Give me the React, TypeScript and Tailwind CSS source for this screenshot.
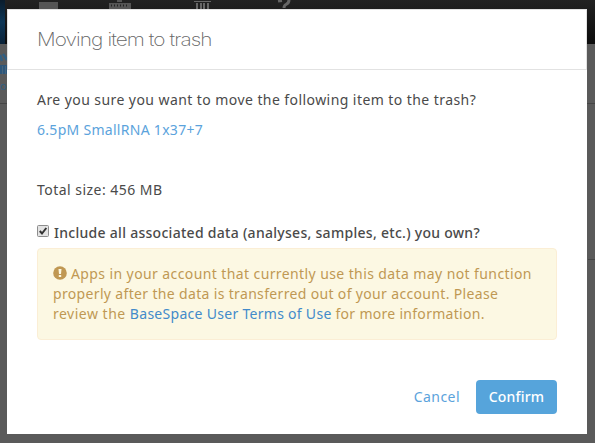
import React from "react";

const line = "block w-fit whitespace-nowrap";

function Backdrop() {
  return (
    <div className="absolute inset-0 flex flex-col bg-[#5a5a5a]">
      <div className="h-11 shrink-0 bg-gradient-to-b from-[#222] to-[#0c0c0c]">
        <svg width="595" height="44" viewBox="0 0 595 44">
          <defs>
            <linearGradient id="brand" x1="0" y1="0" x2="0" y2="1">
              <stop offset="0" stopColor="#0a1c2c" />
              <stop offset="0.5" stopColor="#0d3656" />
              <stop offset="1" stopColor="#0a2238" />
            </linearGradient>
          </defs>
          <rect x="0" y="0" width="5" height="44" fill="url(#brand)" />
          <rect x="39" y="2" width="19" height="8" fill="#555" />
          <rect x="117" y="0" width="5" height="2" fill="#555" />
          <path d="M109 3h22v7h-22z" fill="#555" />
          <path d="M111 5.5h18" stroke="#222" strokeWidth="2" strokeDasharray="1 2" />
          <path d="M194 1h17v1h-17zM196 3h2v7h-2zM200 3h2v7h-2zM203 3h2v7h-2zM207 3h2v7h-2z" fill="#666" />
          <path d="M278 1l4-.5M289 0q0 3-3 4.500q-2 1-2 3.500" fill="none" stroke="#666" strokeWidth="3" />
        </svg>
      </div>
      <svg width="595" height="399" viewBox="0 44 595 399">
        <path d="M0 55l2 6M3 54l4 6" stroke="#315f82" strokeWidth="2.500" />
        <rect x="0" y="65" width="7" height="9" fill="#2d567a" />
        <path d="M2.500 66v8M5.500 66v8" stroke="#46647c" />
        <text x="0" y="90" fontFamily="Noto Sans, sans-serif" fontSize="11" fill="#315f82">o</text>
        <path d="M0 103.5h595M588 259.5h7" stroke="#454545" />
      </svg>
    </div>
  );
}

export default function App() {
  return (
    <div className="relative h-[443px] w-[595px] overflow-hidden font-['Noto_Sans',sans-serif] text-[14px] leading-5 text-[#4a4a4a]">
      <Backdrop />
      <div className="relative ml-[7px] mt-[9px] flex h-[425px] w-[580px] flex-col bg-white">
        <header className="flex h-[61px] shrink-0 items-center border border-[#e2e2e2] pl-[29px]">
          <h1 className={`${line} origin-left scale-x-[1.155] font-['Inter',sans-serif] text-[18px] font-extralight tracking-[-0.8px] text-[#666]`}>Moving item to trash</h1>
        </header>
        <main className="px-[30px] pt-5">
          <p className={`${line} tracking-[0.43px]`}>Are you sure you want to move the following item to the trash?</p>
          <a className={`${line} mt-[10px] tracking-[0.29px] text-[#5ba3dc]`}>6.5pM SmallRNA 1x37+7</a>
          <p className={`${line} mt-10 tracking-[0.47px]`}>Total size: 456 MB</p>
          <label className="mt-[23px] flex h-5 items-center">
            <svg className="-mt-1 mr-[5px]" width="12" height="12" viewBox="0 0 12 12">
              <rect x=".5" y=".5" width="11" height="11" rx="1" fill="#e3e3e3" stroke="#8d8d8d" />
              <path d="M2.800 6l2.200 2.500L9.300 3" fill="none" stroke="#333" strokeWidth="2" />
            </svg>
            <span className={`${line} font-medium tracking-[0.285px]`}>Include all associated data (analyses, samples, etc.) you own?</span>
          </label>
          <div className="mt-[5px] h-[92px] rounded border border-[#fbeed5] bg-[#fcf8e3] px-[15px] pt-[15px] text-[#c09853]">
            <div className="flex items-center">
              <svg className="-mt-0.5 mr-1" width="14" height="14" viewBox="0 0 14 14">
                <circle cx="7" cy="7" r="6.8" fill="currentColor" />
                <path d="M5.500 3h3l-.5 5H6zM5.800 9h2.400v2H5.800z" fill="#fcf8e3" />
              </svg>
              <span className={`${line} tracking-[0.4px]`}>Apps in your account that currently use this data may not function</span>
            </div>
            <p className={`${line} tracking-[0.34px]`}>properly after the data is transferred out of your account. Please</p>
            <p className={`${line} tracking-[0.29px]`}>
              <span className="tracking-[0.5px]">review the </span>
              <a className="text-[#428bca]">BaseSpace User Terms of Use</a> for more information.
            </p>
          </div>
        </main>
        <footer className="mt-10 flex items-center justify-end pr-[30px]">
          <button className={`${line} mr-4 tracking-[0.45px] text-[#5ba3dc]`}>Cancel</button>
          <button className="h-[34px] w-[81px] rounded bg-[#56a4db] font-medium tracking-[0.2px] text-white">Confirm</button>
        </footer>
      </div>
    </div>
  );
}
